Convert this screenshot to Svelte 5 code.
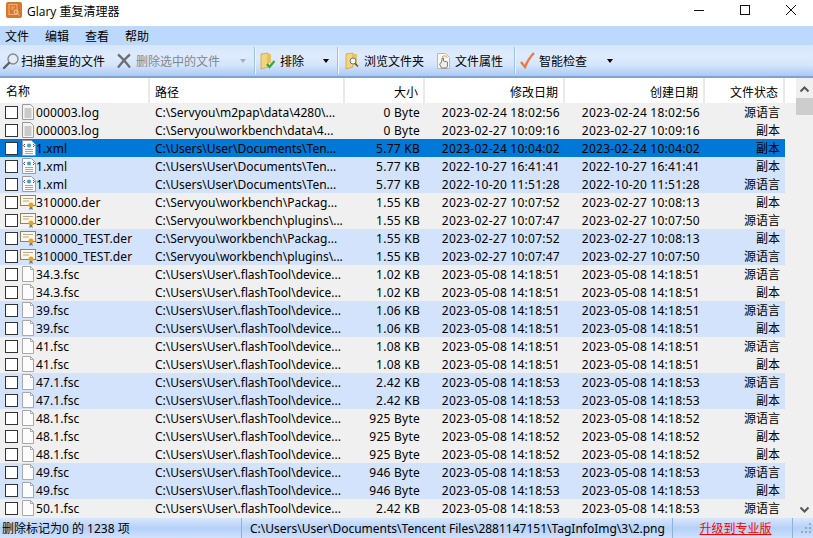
<script>
  const xml = "C:\\Users\\User\\Documents\\Ten...";
  const pk = "C:\\Servyou\\workbench\\Packag...";
  const pl = "C:\\Servyou\\workbench\\plugins\\...";
  const fl = "C:\\Users\\User\\.flashTool\\device...";
  const SRC = "源语言";
  const COPY = "副本";

  const rows = [
    { name: "000003.log", icon: "log", path: "C:\\Servyou\\m2pap\\data\\4280\\...", size: "0 Byte", mod: "2023-02-24 18:02:56", made: "2023-02-24 18:02:56", state: SRC, tone: "gray" },
    { name: "000003.log", icon: "log", path: "C:\\Servyou\\workbench\\data\\4...", size: "0 Byte", mod: "2023-02-27 10:09:16", made: "2023-02-27 10:09:16", state: COPY, tone: "gray" },
    { name: "1.xml", icon: "xml", path: xml, size: "5.77 KB", mod: "2023-02-24 10:04:02", made: "2023-02-24 10:04:02", state: COPY, tone: "sel" },
    { name: "1.xml", icon: "xml", path: xml, size: "5.77 KB", mod: "2022-10-27 16:41:41", made: "2022-10-27 16:41:41", state: COPY, tone: "blue" },
    { name: "1.xml", icon: "xml", path: xml, size: "5.77 KB", mod: "2022-10-20 11:51:28", made: "2022-10-20 11:51:28", state: SRC, tone: "blue" },
    { name: "310000.der", icon: "der", path: pk, size: "1.55 KB", mod: "2023-02-27 10:07:52", made: "2023-02-27 10:08:13", state: COPY, tone: "gray" },
    { name: "310000.der", icon: "der", path: pl, size: "1.55 KB", mod: "2023-02-27 10:07:47", made: "2023-02-27 10:07:50", state: SRC, tone: "gray" },
    { name: "310000_TEST.der", icon: "der", path: pk, size: "1.55 KB", mod: "2023-02-27 10:07:52", made: "2023-02-27 10:08:13", state: COPY, tone: "blue" },
    { name: "310000_TEST.der", icon: "der", path: pl, size: "1.55 KB", mod: "2023-02-27 10:07:47", made: "2023-02-27 10:07:50", state: SRC, tone: "blue" },
    { name: "34.3.fsc", icon: "doc", path: fl, size: "1.02 KB", mod: "2023-05-08 14:18:51", made: "2023-05-08 14:18:51", state: SRC, tone: "gray" },
    { name: "34.3.fsc", icon: "doc", path: fl, size: "1.02 KB", mod: "2023-05-08 14:18:51", made: "2023-05-08 14:18:51", state: COPY, tone: "gray" },
    { name: "39.fsc", icon: "doc", path: fl, size: "1.06 KB", mod: "2023-05-08 14:18:51", made: "2023-05-08 14:18:51", state: SRC, tone: "blue" },
    { name: "39.fsc", icon: "doc", path: fl, size: "1.06 KB", mod: "2023-05-08 14:18:51", made: "2023-05-08 14:18:51", state: COPY, tone: "blue" },
    { name: "41.fsc", icon: "doc", path: fl, size: "1.08 KB", mod: "2023-05-08 14:18:51", made: "2023-05-08 14:18:51", state: SRC, tone: "gray" },
    { name: "41.fsc", icon: "doc", path: fl, size: "1.08 KB", mod: "2023-05-08 14:18:51", made: "2023-05-08 14:18:51", state: COPY, tone: "gray" },
    { name: "47.1.fsc", icon: "doc", path: fl, size: "2.42 KB", mod: "2023-05-08 14:18:53", made: "2023-05-08 14:18:53", state: SRC, tone: "blue" },
    { name: "47.1.fsc", icon: "doc", path: fl, size: "2.42 KB", mod: "2023-05-08 14:18:53", made: "2023-05-08 14:18:53", state: COPY, tone: "blue" },
    { name: "48.1.fsc", icon: "doc", path: fl, size: "925 Byte", mod: "2023-05-08 14:18:52", made: "2023-05-08 14:18:52", state: SRC, tone: "gray" },
    { name: "48.1.fsc", icon: "doc", path: fl, size: "925 Byte", mod: "2023-05-08 14:18:52", made: "2023-05-08 14:18:52", state: COPY, tone: "gray" },
    { name: "48.1.fsc", icon: "doc", path: fl, size: "925 Byte", mod: "2023-05-08 14:18:52", made: "2023-05-08 14:18:52", state: COPY, tone: "gray" },
    { name: "49.fsc", icon: "doc", path: fl, size: "946 Byte", mod: "2023-05-08 14:18:53", made: "2023-05-08 14:18:53", state: SRC, tone: "blue" },
    { name: "49.fsc", icon: "doc", path: fl, size: "946 Byte", mod: "2023-05-08 14:18:53", made: "2023-05-08 14:18:53", state: COPY, tone: "blue" },
    { name: "50.1.fsc", icon: "doc", path: fl, size: "2.42 KB", mod: "2023-05-08 14:18:53", made: "2023-05-08 14:18:53", state: SRC, tone: "gray" }
  ];
</script>

<div class="window">
  <div class="titlebar">
    <svg class="app-icon" width="16" height="16" viewBox="0 0 16 16">
      <rect width="16" height="16" rx="2" fill="#d8762a" />
      <rect x="3" y="2.5" width="8" height="10" fill="none" stroke="#f0b27c" stroke-width="1" />
      <path d="M5 5h4M5 7h3" stroke="#f0b27c" />
      <circle cx="10" cy="10" r="2" fill="none" stroke="#f6cfa4" />
      <path d="M11.5 11.5l2 2" stroke="#f6cfa4" />
    </svg>
    <span class="title">Glary 重复清理器</span>
    <div class="controls">
      <svg width="10" height="10" viewBox="0 0 10 10"><path d="M0 5.5h10" stroke="#111" /></svg>
      <svg width="10" height="10" viewBox="0 0 10 10"><rect x=".5" y=".5" width="9" height="9" fill="none" stroke="#111" /></svg>
      <svg width="10" height="10" viewBox="0 0 10 10"><path d="M0 0l10 10M10 0L0 10" stroke="#111" /></svg>
    </div>
  </div>

  <div class="menubar">
    <span>文件</span><span>编辑</span><span>查看</span><span>帮助</span>
  </div>

  <div class="toolbar">
    <div class="btn scan">
      <svg width="18" height="20" viewBox="0 0 18 20">
        <circle cx="11" cy="8" r="5" fill="#e4ecf4" stroke="#7f8a94" stroke-width="1.4" />
        <path d="M7 12l-5 5" stroke="#5b6066" stroke-width="2.4" stroke-linecap="round" />
      </svg>
      <span>扫描重复的文件</span>
    </div>
    <div class="btn del disabled">
      <svg width="16" height="16" viewBox="0 0 16 16">
        <path d="M2 1.5c4 3 8 8 12 13M14 1.5c-4 3-8 8-12 13" fill="none" stroke="#6d6f72" stroke-width="2.2" />
      </svg>
      <span>删除选中的文件</span>
    </div>
    <i class="caret faded first"></i>
    <b class="sep one"></b>
    <div class="btn">
      <svg width="16" height="18" viewBox="0 0 16 18">
        <path d="M1 2l7-1v14l-7 2z" fill="#f3d67c" stroke="#c9a24a" stroke-width=".8" />
        <path d="M8 2h3v9H8z" fill="#e6c266" />
        <path d="M7 12l2.500 3 5-6" fill="none" stroke="#3da63a" stroke-width="2.200" />
      </svg>
      <span>排除</span>
    </div>
    <i class="caret second"></i>
    <b class="sep two"></b>
    <div class="btn browse">
      <svg width="15" height="18" viewBox="0 0 15 18">
        <path d="M1 2l7-1v14l-7 2z" fill="#f3d67c" stroke="#c9a24a" stroke-width=".8" />
        <path d="M8 2h4v11H8z" fill="#e6c266" />
        <circle cx="8" cy="9" r="3" fill="#f4f6f8" stroke="#6f7780" />
        <path d="M10 11.500l3 3" stroke="#5b5040" stroke-width="1.600" />
      </svg>
      <span>浏览文件夹</span>
    </div>
    <div class="btn props">
      <svg width="15" height="18" viewBox="0 0 15 18">
        <path d="M1.500 1.500h8l4 4v11h-12z" fill="#f7f7f5" stroke="#b9b9b4" />
        <path d="M6 5c2-2 5-1 5 1" fill="none" stroke="#e2903c" />
        <path d="M6 8v-2h1.500v3l4 1v4l-1 2h-5l-2-4 1.500-1z" fill="#ededea" stroke="#77736c" stroke-width=".9" />
      </svg>
      <span>文件属性</span>
    </div>
    <b class="sep three"></b>
    <div class="btn check">
      <svg width="15" height="17" viewBox="0 0 15 17">
        <path d="M1 10l4 5c2-5 5-10 9-14" fill="none" stroke="#ec7a42" stroke-width="2.400" />
      </svg>
      <span>智能检查</span>
    </div>
    <i class="caret third"></i>
  </div>

  <div class="content">
    <div class="list">
      <div class="row head">
        <div class="c name">名称</div>
        <div class="c">路径</div>
        <div class="c r">大小</div>
        <div class="c r">修改日期</div>
        <div class="c r">创建日期</div>
        <div class="c r">文件状态</div>
      </div>
      {#each rows as row}
        <div class="row {row.tone}">
          <div class="c name">
            <span class="box"></span>
            {#if row.icon === "log"}
              <svg class="file" width="12" height="16" viewBox="0 0 12 16">
                <path d="M.5.500h8l3 3v12H.5z" fill="#f4f4f4" stroke="#9a9a9a" />
                <path d="M2.500 5h7M2.500 7h7M2.500 9h7M2.500 11h7M2.500 13h7" stroke="#a0a0a0" />
              </svg>
            {:else if row.icon === "xml"}
              <svg class="file xml" width="14" height="16" viewBox="0 0 14 16">
                <path d="M.5.500h9l4 4v11H.5z" fill="#fafafa" stroke="#9a9aa8" />
                <circle cx="7" cy="5.500" r="2" fill="#3d9fc6" />
                <path d="M3 4l-1.500 1.500L3 7M11 4l1.500 1.500L11 7" fill="none" stroke="#47506a" />
                <path d="M3 9.500h8M3 11.500h8M3 13.500h8" stroke="#9aa6c6" />
              </svg>
            {:else if row.icon === "der"}
              <svg class="file cert" width="16" height="16" viewBox="0 0 16 16">
                <rect x=".5" y="1.500" width="15" height="10" fill="#fbf6ea" stroke="#97815a" />
                <path d="M3 4.500h10M3 7h6" stroke="#b8a98a" />
                <circle cx="11" cy="11" r="2.500" fill="#e9a41f" />
                <path d="M10 13l-1 3 2-1 2 1-1-3" fill="#4a7fc0" />
              </svg>
            {:else}
              <svg class="file" width="12" height="16" viewBox="0 0 12 16">
                <path d="M.5.500h8l3 3v12H.5z" fill="#fcfcfc" stroke="#a9a9a9" />
                <path d="M8.500.500v3h3" fill="none" stroke="#a9a9a9" />
              </svg>
            {/if}
            <span class="label">{row.name}</span>
          </div>
          <div class="c path">{row.path}</div>
          <div class="c r">{row.size}</div>
          <div class="c r">{row.mod}</div>
          <div class="c r">{row.made}</div>
          <div class="c r state">{row.state}</div>
        </div>
      {/each}
    </div>
    <div class="scroll">
      <svg class="arrow" width="17" height="17" viewBox="0 0 17 17"><path d="M4.500 10.500l4-4 4 4" fill="none" stroke="#555" stroke-width="2" /></svg>
      <div class="thumb"></div>
      <div class="track"></div>
      <svg class="arrow" width="17" height="17" viewBox="0 0 17 17"><path d="M4.500 6.500l4 4 4-4" fill="none" stroke="#555" stroke-width="2" /></svg>
    </div>
  </div>

  <div class="status">
    <div class="cell count">删除标记为0 的 1238 项</div>
    <div class="cell where">C:\Users\User\Documents\Tencent Files\2881147151\TagInfoImg\3\2.png</div>
    <div class="cell upgrade"><span>升级到专业版</span></div>
    <div class="cell grip">
      <svg width="12" height="12" viewBox="0 0 12 12" fill="#8fa9cc">
        <rect x="9" y="1" width="2" height="2" /><rect x="5" y="5" width="2" height="2" /><rect x="9" y="5" width="2" height="2" />
        <rect x="1" y="9" width="2" height="2" /><rect x="5" y="9" width="2" height="2" /><rect x="9" y="9" width="2" height="2" />
      </svg>
    </div>
  </div>
</div>

<style>
  :global(body) {
    margin: 0;
    overflow: hidden;
  }
  .window {
    width: 813px;
    height: 538px;
    display: flex;
    flex-direction: column;
    background: #fff;
    color: #000;
    font-family: "Noto Sans", "Noto Sans CJK SC", sans-serif;
    font-size: 12px;
    letter-spacing: 0.25px;
  }
  .titlebar {
    height: 26px;
    display: flex;
    align-items: center;
    padding-left: 6px;
    font-family: "Open Sans", "Noto Sans CJK SC", sans-serif;
    letter-spacing: 0;
  }
  .app-icon {
    margin-top: -6px;
  }
  .title {
    margin-left: 5px;
    margin-top: -5px;
  }
  .controls {
    margin-left: auto;
    margin-top: -6px;
    margin-right: 17px;
    display: flex;
    gap: 36px;
  }
  .menubar {
    height: 19px;
    display: flex;
    align-items: center;
    background: #bcd8fb;
    letter-spacing: 0;
  }
  .menubar span {
    width: 40px;
    padding-left: 5px;
    box-sizing: border-box;
  }
  .toolbar {
    height: 31px;
    display: flex;
    align-items: center;
    background: linear-gradient(#d6e6fc 0, #dfebfd 35%, #d5e5fb 65%, #a9c8f4 100%);
    border-bottom: 2px solid #7ea3d6;
    letter-spacing: 0;
  }
  .btn {
    display: flex;
    align-items: center;
    gap: 4px;
    flex: none;
  }
  .disabled {
    color: #82878f;
  }
  .scan {
    margin-left: 2px;
    gap: 1px;
  }
  .del {
    margin-left: 11px;
  }
  .caret {
    width: 0;
    height: 0;
    border-left: 3.5px solid transparent;
    border-right: 3.5px solid transparent;
    border-top: 4px solid #000;
    flex: none;
  }
  .caret.faded {
    border-top-color: #a4adb8;
  }
  .caret.first {
    margin-left: 20px;
  }
  .caret.second {
    margin-left: 19px;
  }
  .caret.third {
    margin-left: 20px;
  }
  .sep {
    width: 1px;
    height: 27px;
    background: #9cc0ee;
    box-shadow: 1px 0 0 #f2f7fe;
    flex: none;
  }
  .sep.one {
    margin: 0 5px 0 8px;
  }
  .sep.two {
    margin: 0 7px 0 8px;
  }
  .sep.three {
    margin: 0 5px 0 11px;
  }
  .props {
    margin-left: 12px;
  }
  .check {
    margin-left: 0;
  }
  .content {
    flex: 1;
    display: flex;
    min-height: 0;
    background: #f0f0f0;
  }
  .list {
    width: 796px;
    flex: none;
    overflow: hidden;
  }
  .row {
    width: 785px;
    height: 18px;
    display: grid;
    grid-template-columns: 150px 195px 80px 140px 140px 80px;
    align-items: center;
  }
  .head {
    width: 796px;
    height: 25px;
    grid-template-columns: 150px 195px 80px 140px 140px 80px 11px;
    background: #fff;
    letter-spacing: 0;
  }
  .head .c {
    height: 25px;
    line-height: 27px;
    border-right: 2px solid #eaeaea;
    box-sizing: border-box;
  }
  .head .c.name {
    display: block;
    padding-left: 6px;
  }
  .c {
    padding: 1px 5px 0;
    white-space: nowrap;
    overflow: hidden;
    line-height: 17px;
  }
  .c.r {
    text-align: right;
  }
  .path {
    letter-spacing: 0;
  }
  .state {
    letter-spacing: 0;
  }
  .c.name {
    display: flex;
    align-items: center;
    overflow: visible;
    padding-top: 0;
    letter-spacing: 0.1px;
  }
  .gray {
    background: #f0f0f0;
  }
  .blue {
    background: #d3e3fb;
  }
  .sel {
    background: #0078d7;
  }
  .box {
    width: 11px;
    height: 11px;
    border: 1px solid #333;
    background: #fff;
    flex: none;
  }
  .file {
    margin-left: 4px;
    flex: none;
  }
  .xml {
    margin-right: -2px;
  }
  .cert {
    margin-left: 2px;
    margin-right: -2px;
  }
  .label {
    margin-left: 2px;
    padding-top: 1px;
  }
  .scroll {
    width: 17px;
    flex: none;
    display: flex;
    flex-direction: column;
    background: #f0f0f0;
  }
  .arrow {
    margin-top: 3px;
    flex: none;
  }
  .thumb {
    height: 17px;
    background: #cdcdcd;
    flex: none;
  }
  .track {
    flex: 1;
  }
  .status {
    height: 20px;
    display: flex;
    align-items: center;
    background: linear-gradient(#d8e7fc 0, #b5d1f8 50%, #cfe1fb 100%);
    letter-spacing: 0;
  }
  .cell {
    height: 100%;
    display: flex;
    align-items: center;
    box-sizing: border-box;
    flex: none;
    white-space: nowrap;
  }
  .count {
    width: 242px;
    padding-left: 2px;
    border-right: 1px solid #8eb0dd;
  }
  .where {
    width: 431px;
    padding-left: 8px;
    border-right: 1px solid #8eb0dd;
  }
  .upgrade {
    width: 120px;
    padding-left: 6px;
    justify-content: center;
    color: #f00;
    text-decoration: underline;
    border-right: 1px solid #8eb0dd;
  }
  .grip {
    flex: 1;
    justify-content: flex-end;
    padding-right: 1px;
  }
</style>
